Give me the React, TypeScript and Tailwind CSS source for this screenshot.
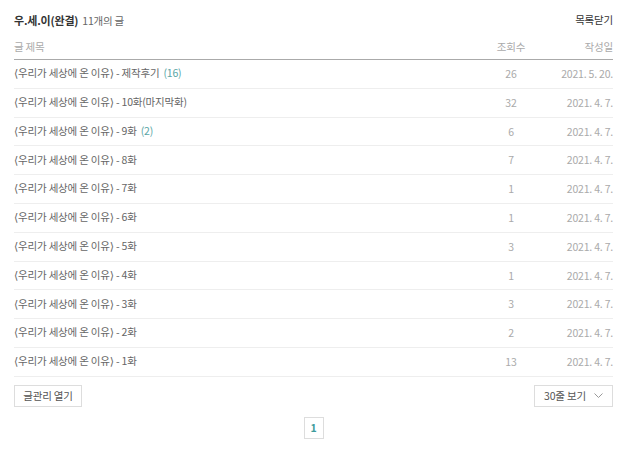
const rows = [
  { title: "우리가 세상에 온 이유", ep: " - 제작후기", comments: 16, views: 26, date: "2021. 5. 20." },
  { title: "우리가 세상에 온 이유", ep: " - 10화(마지막화)", views: 32, date: "2021. 4. 7." },
  { title: "우리가 세상에 온 이유", ep: " - 9화", comments: 2, views: 6, date: "2021. 4. 7." },
  { title: "우리가 세상에 온 이유", ep: " - 8화", views: 7, date: "2021. 4. 7." },
  { title: "우리가 세상에 온 이유", ep: " - 7화", views: 1, date: "2021. 4. 7." },
  { title: "우리가 세상에 온 이유", ep: " - 6화", views: 1, date: "2021. 4. 7." },
  { title: "우리가 세상에 온 이유", ep: " - 5화", views: 3, date: "2021. 4. 7." },
  { title: "우리가 세상에 온 이유", ep: " - 4화", views: 1, date: "2021. 4. 7." },
  { title: "우리가 세상에 온 이유", ep: " - 3화", views: 3, date: "2021. 4. 7." },
  { title: "우리가 세상에 온 이유", ep: " - 2화", views: 2, date: "2021. 4. 7." },
  { title: "우리가 세상에 온 이유", ep: " - 1화", views: 13, date: "2021. 4. 7." },
];

const App = () => {
  return (
    <div className="w-[632px] h-[454px] bg-white pl-[14px] pr-[19px] pt-[11px] font-['Noto_Sans_CJK_KR','Noto_Sans',sans-serif] text-[10.5px] tracking-[-0.2px]">
      <div className="flex items-center justify-between h-[18px]">
        <div>
          <span className="font-bold text-[#333] text-[11px]">우.세.이(완결)</span>
          <span className="text-[#666] ml-1">11개의 글</span>
        </div>
        <span className="text-[#333]">목록닫기</span>
      </div>

      <div className="flex items-center h-[31px] border-b border-[#aaa] text-[#aaa] pt-[6px]">
        <span className="flex-1">글 제목</span>
        <span className="w-[40px] text-center">조회수</span>
        <span className="w-[82px] text-right">작성일</span>
      </div>

      {rows.map((r, i) => (
        <div key={i} className="flex items-center h-[28.8px] border-b border-[#eee]">
          <span className="flex-1 text-[#666]">
            <span className="font-['DejaVu_Sans',sans-serif] text-[11px]">⟨</span>
            {r.title}
            <span className="font-['DejaVu_Sans',sans-serif] text-[11px]">⟩</span>
            {r.ep}
            {r.comments && <span className="text-[#5aa6a6] ml-1">({r.comments})</span>}
          </span>
          <span className="w-[40px] text-center text-[#aaa]">{r.views}</span>
          <span className="w-[82px] text-right text-[#aaa]">{r.date}</span>
        </div>
      ))}

      <div className="flex justify-between mt-[8px]">
        <button type="button" className="h-[22px] w-[68px] border border-[#ddd] text-[#555]">
          글관리 열기
        </button>
        <button type="button" className="h-[22px] w-[79px] border border-[#ddd] text-[#555] flex items-center justify-center gap-2">
          30줄 보기
          <svg width="9" height="6" viewBox="0 0 9 6" fill="none" stroke="#999" strokeWidth="1">
            <path d="M0.5 0.5 L4.5 4.5 L8.5 0.5" />
          </svg>
        </button>
      </div>

      <div className="flex justify-center mt-[10px]">
        <span className="w-[20px] h-[22px] border border-[#ddd] flex items-center justify-center text-[#3d9b9b] font-bold">
          1
        </span>
      </div>
    </div>
  );
};

export default App;
